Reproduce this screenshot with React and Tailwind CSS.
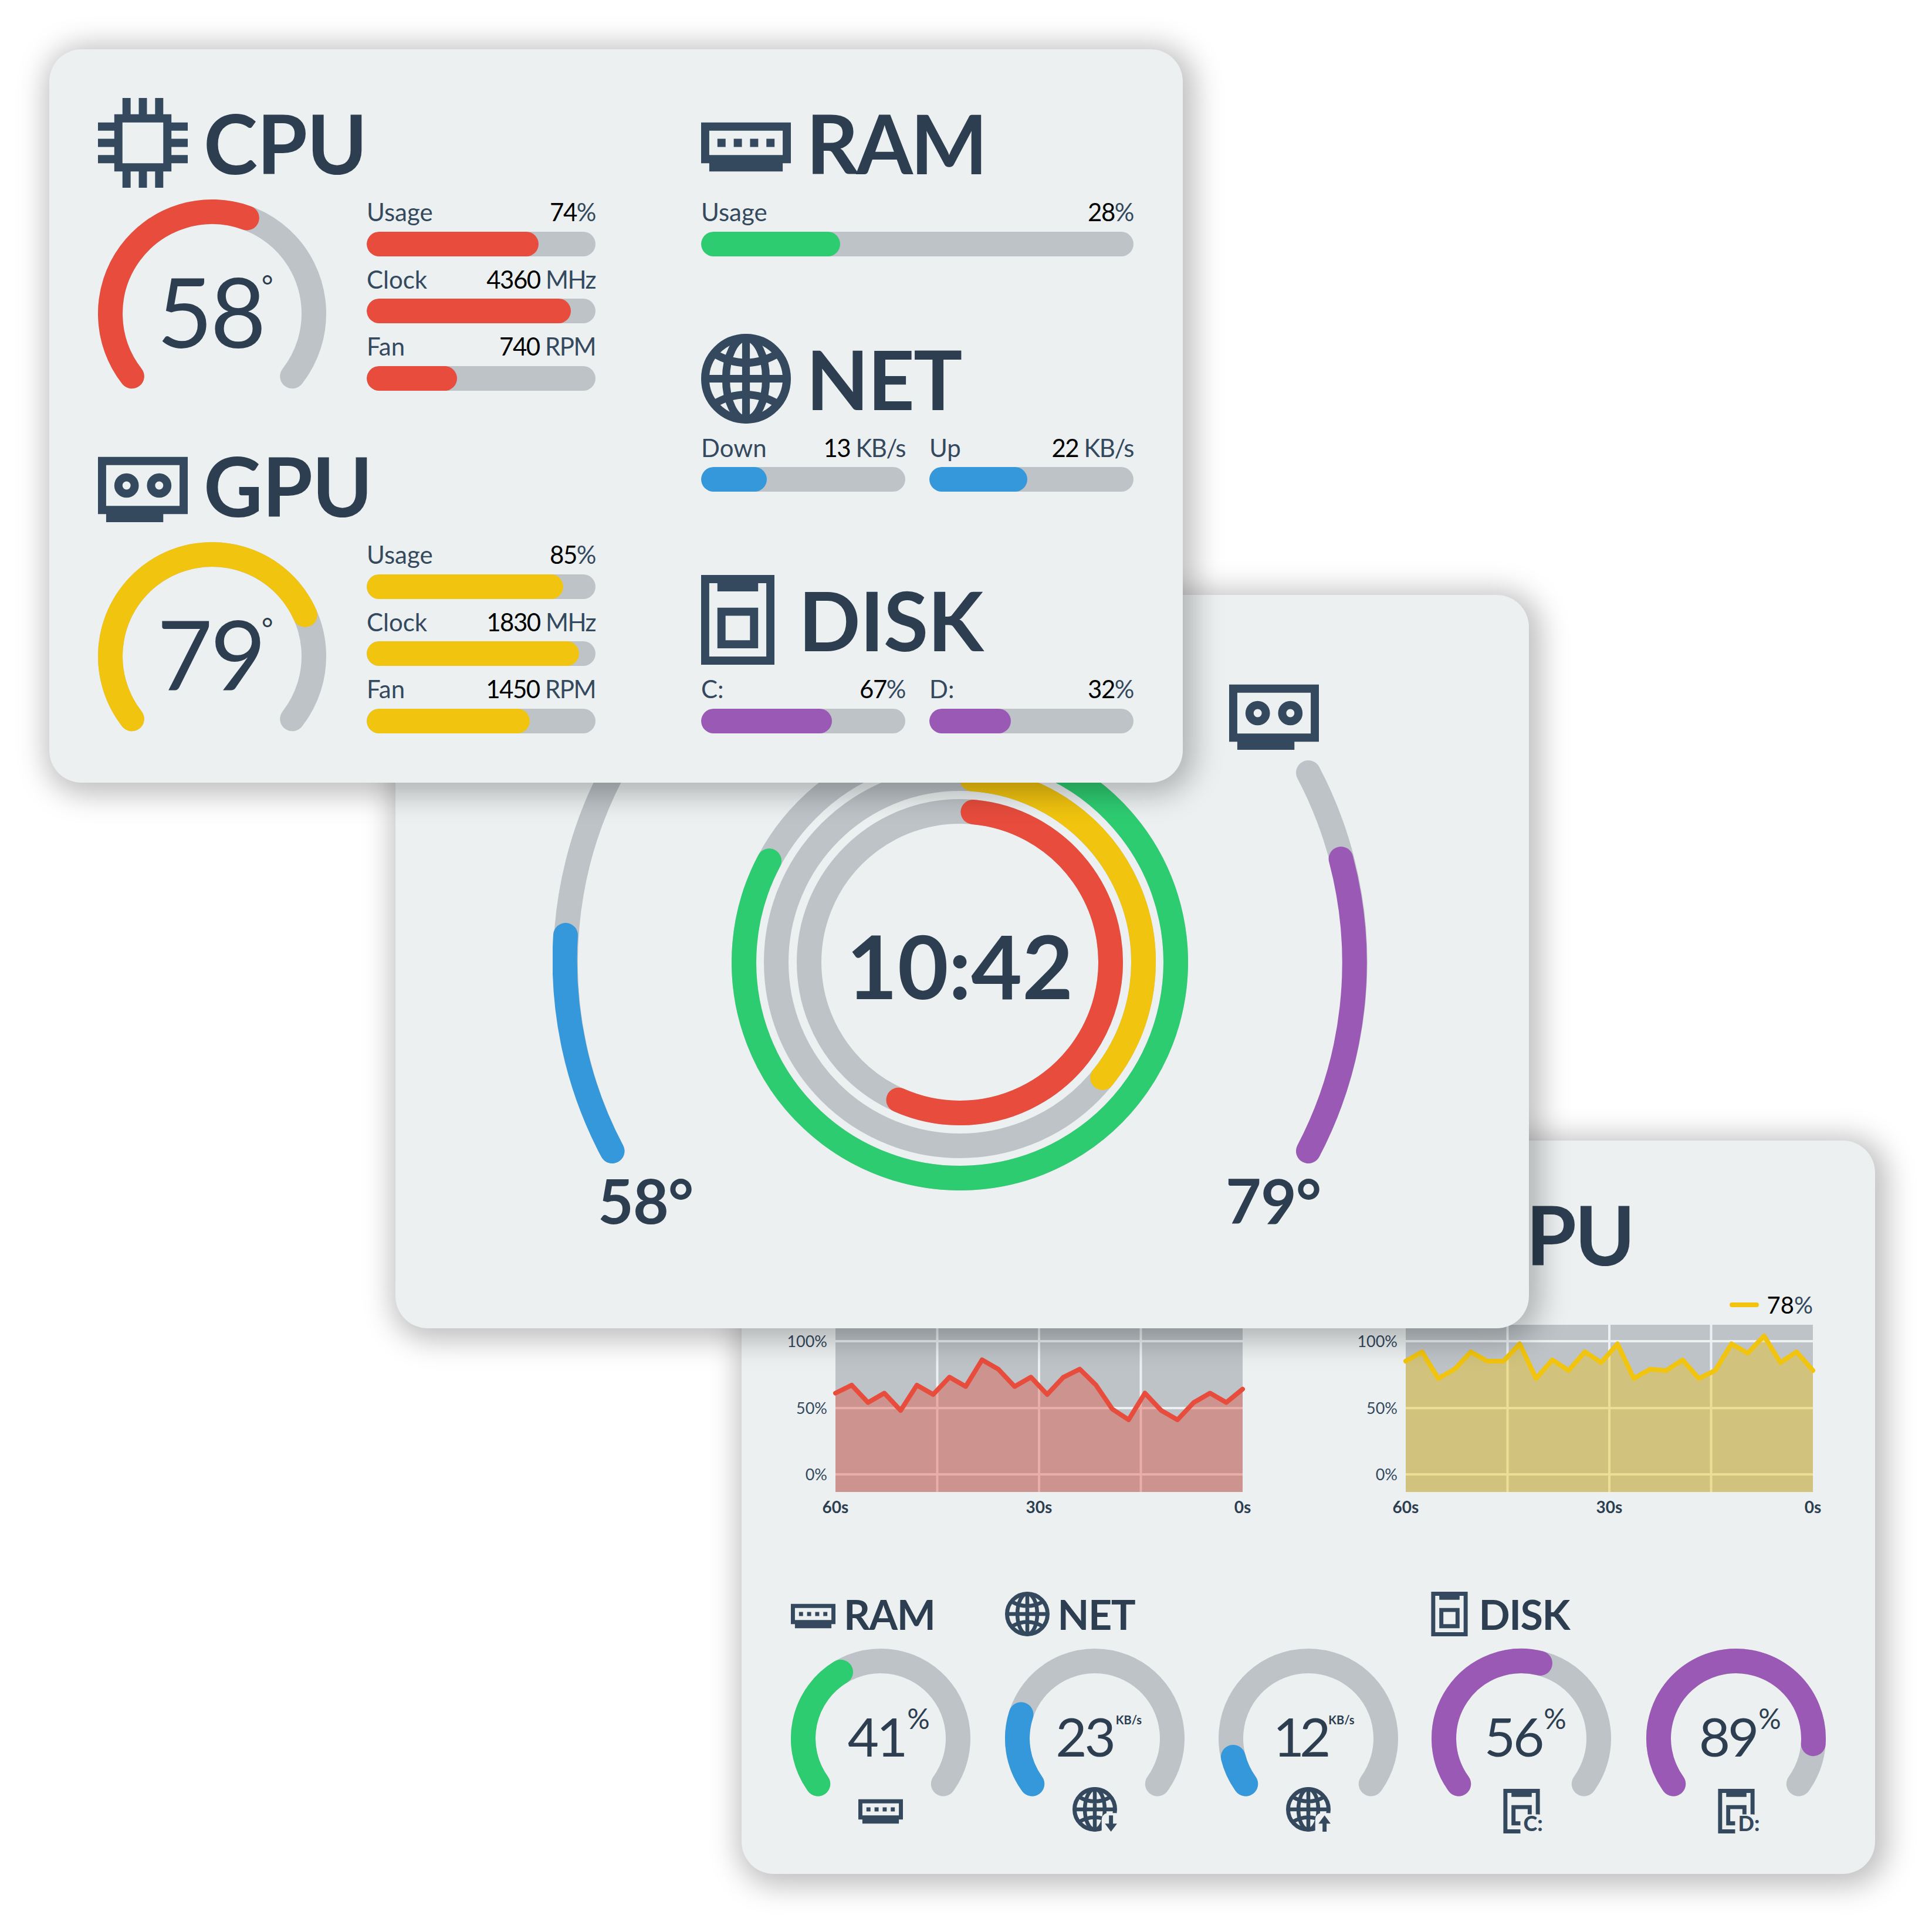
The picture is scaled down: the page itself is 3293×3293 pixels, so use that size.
import React from 'react';

const RED = '#e74c3c';
const YELLOW = '#f1c40f';
const GREEN = '#2ecc71';
const BLUE = '#3498db';
const PURPLE = '#9b59b6';
const TRACK = '#bdc3c7';
const SLATE = '#34495e';

const panelClass =
  'absolute w-[1932px] h-[1250px] rounded-[55px] bg-[#ecf0f1] shadow-[7px_7px_48px_14px_rgba(0,0,0,0.25)]';

const polar = (cx, cy, r, deg) => {
  const a = (deg * Math.PI) / 180;
  return [cx + r * Math.sin(a), cy - r * Math.cos(a)];
};

const arcPath = (cx, cy, r, from, to) => {
  const [x0, y0] = polar(cx, cy, r, from);
  const [x1, y1] = polar(cx, cy, r, to);
  return `M${x0} ${y0}A${r} ${r} 0 ${to - from > 180 ? 1 : 0} 1 ${x1} ${y1}`;
};

// icons, all on a 13.9px unit grid
const CpuIcon = ({ className }) => (
  <svg viewBox="0 0 11 11" className={className} fill={SLATE}>
    <path
      fillRule="evenodd"
      d="M3 0H4V2H5V0H6V2H7V0H8V2H9V3H11V4H9V5H11V6H9V7H11V8H9V9H8V11H7V9H6V11H5V9H4V11H3V9H2V8H0V7H2V6H0V5H2V4H0V3H2V2H3ZM3 3V8H8V3Z"
    />
  </svg>
);

const RamIcon = ({ className }) => (
  <svg viewBox="0 -3 11 11" className={className} fill={SLATE}>
    <path fillRule="evenodd" d="M0 0H11V5H10V6H1V5H0ZM1 1V4H10V1Z" />
    <path d="M2 2H3V3H2ZM4 2H5V3H4ZM6 2H7V3H6ZM8 2H9V3H8Z" />
  </svg>
);

const GpuIcon = ({ className }) => (
  <svg viewBox="0 -2 11 11" className={className} fill={SLATE}>
    <path fillRule="evenodd" d="M0 0H11V7H8V8H1V7H0ZM1 1V6H10V1Z" />
    <circle cx="3.5" cy="3.5" r="1" fill="none" stroke={SLATE} strokeWidth="1" />
    <circle cx="7.5" cy="3.5" r="1" fill="none" stroke={SLATE} strokeWidth="1" />
  </svg>
);

const Globe = () => (
  <g fill="none" stroke={SLATE} strokeWidth="0.95">
    <circle cx="5.5" cy="5.5" r="5" strokeWidth="1" />
    <ellipse cx="5.5" cy="5.5" rx="2.45" ry="5" />
    <path d="M5.5 .5V10.5M.5 5.5H10.5M1.4 2.3Q5.5 4.8 9.6 2.3M1.4 8.7Q5.5 6.2 9.6 8.7" />
  </g>
);

const GlobeIcon = ({ className, arrow }) => (
  <svg viewBox="0 0 11 11" className={className}>
    <Globe />
    {arrow && <rect x="7.2" y="6.4" width="5" height="6" rx="1.6" fill="#ecf0f1" />}
    {arrow === 'down' && <path d="M9 7H10V9H11L9.5 11L8 9H9Z" fill={SLATE} />}
    {arrow === 'up' && <path d="M9.5 7L11 9H10V11H9V9H8Z" fill={SLATE} />}
  </svg>
);

const DiskIcon = ({ className, letter }) => (
  <div className="relative flex">
    <svg viewBox="0 0 9 11" className={className} fill={SLATE}>
      <path fillRule="evenodd" d="M0 0H9V11H0ZM1 1V10H8V1H7V2H2V1ZM2 4H7V9H2ZM3 5V8H6V5Z" />
      {letter && <rect x="4.2" y="6.3" width="6" height="6" rx="1.6" fill="#ecf0f1" />}
    </svg>
    {letter && (
      <span className="absolute left-[35px] bottom-[-5px] font-['Lato',sans-serif] text-[36px] leading-[40px] font-black text-[#34495e] whitespace-nowrap">
        {letter}
      </span>
    )}
  </div>
);

const Header = ({ icon, title, className, titleClass }) => (
  <div className={`flex items-center h-[153px] ${className}`}>
    {icon}
    <span className={`text-[139px] leading-[153px] font-bold text-[#2c3e50] ${titleClass || 'tracking-[-1px]'}`}>{title}</span>
  </div>
);

const Bar = ({ label, value, unit, fill, color, className }) => (
  <div className={`flex flex-col ${className}`}>
    <div className="flex justify-between items-end h-[64px] mb-[8.5px] text-[42px] leading-[50px] text-[#34495e]">
      <span>{label}</span>
      <span className="tracking-[-1.5px]">
        <span className="text-black">{value}</span>
        {unit}
      </span>
    </div>
    <div className="h-[42px] rounded-full bg-[#bdc3c7] overflow-hidden">
      <div className={`h-full rounded-full ${color}`} style={{ width: fill }} />
    </div>
  </div>
);

// big gauge with bars next to it
const Gauge = ({ box, center, r, span, end, color, textClass, children }) => (
  <div className={`relative shrink-0 ${box}`}>
    <svg className="w-full h-full overflow-visible" fill="none" strokeWidth="42" strokeLinecap="round">
      <path d={arcPath(center, center, r, -span, span)} stroke={TRACK} />
      <path d={arcPath(center, center, r, -span, end)} stroke={color} />
    </svg>
    <div className={`absolute left-0 right-0 top-0 flex items-center justify-center ${textClass}`}>{children}</div>
  </div>
);

const Degree = ({ value }) => (
  <span className="relative mb-[10px] mr-[6px] text-[164px] leading-none tracking-[-4px] text-[#2c3e50]">
    {value}
    <span className="absolute left-full top-[9px] ml-[-4px] text-[48px] leading-[60px] tracking-normal">°</span>
  </span>
);

const SmallValue = ({ value, sup, bold, className }) => (
  <span className={`relative mb-[8px] text-[92px] leading-none text-[#2c3e50] ${className}`}>
    {value}
    <span
      className={`absolute left-full tracking-normal whitespace-nowrap ${
        bold ? 'ml-[4px] top-[6px] text-[20px] leading-[24px] font-bold' : 'ml-[3px] top-[-12px] text-[48px] leading-[56px]'
      }`}
    >
      {sup}
    </span>
  </span>
);

const SmallGauge = ({ end, color, value, sup, bold, shift, icon, className }) => (
  <div className={`flex flex-col items-center ${className || ''}`}>
    <Gauge
      box="w-[306px] h-[251px]"
      center={153}
      r={132}
      span={126}
      end={end}
      color={color}
      textClass="h-[306px]"
    >
      <SmallValue value={value} sup={sup} bold={bold} className={shift} />
    </Gauge>
    <div className="mt-[-15px] h-[76px] flex">{icon}</div>
  </div>
);

const HwSection = ({ header, gauge, bars, className }) => (
  <div className={className}>
    {header}
    <div className="flex gap-[69px]">
      <div className="mt-[20px]">{gauge}</div>
      <div className="w-[390px] mt-[2px]">{bars}</div>
    </div>
  </div>
);

const InfoPanel = () => (
  <div className={`${panelClass} left-[84px] top-[84px] flex pl-[83px] pt-[83px]`}>
    <div className="w-[1028px] shrink-0">
      <HwSection
        header={<Header className="gap-[27px]" icon={<CpuIcon className="w-[153px] h-[153px]" />} title="CPU" />}
        gauge={
          <Gauge box="w-[389px] h-[330px]" center={194.5} r={173.5} span={128} end={20} color={RED} textClass="h-[389px]">
            <Degree value="58" />
          </Gauge>
        }
        bars={
          <>
            <Bar label="Usage" value="74" unit="%" fill={293} color="bg-[#e74c3c]" />
            <Bar label="Clock" value="4360" unit=" MHz" fill={348} color="bg-[#e74c3c]" />
            <Bar label="Fan" value="740" unit=" RPM" fill={154} color="bg-[#e74c3c]" />
          </>
        }
      />
      <HwSection
        className="mt-[81px]"
        header={<Header className="gap-[27px]" icon={<GpuIcon className="w-[153px] h-[153px]" />} title="GPU" />}
        gauge={
          <Gauge box="w-[389px] h-[330px]" center={194.5} r={173.5} span={128} end={66} color={YELLOW} textClass="h-[389px]">
            <Degree value="79" />
          </Gauge>
        }
        bars={
          <>
            <Bar label="Usage" value="85" unit="%" fill={335} color="bg-[#f1c40f]" />
            <Bar label="Clock" value="1830" unit=" MHz" fill={362} color="bg-[#f1c40f]" />
            <Bar label="Fan" value="1450" unit=" RPM" fill={278} color="bg-[#f1c40f]" />
          </>
        }
      />
    </div>
    <div className="w-[737px] shrink-0">
      <Header className="gap-[26px]" titleClass="tracking-[-4px]" icon={<RamIcon className="w-[153px] h-[153px]" />} title="RAM" />
      <Bar className="mt-[2px]" label="Usage" value="28" unit="%" fill={237} color="bg-[#2ecc71]" />

      <Header className="gap-[26px] mt-[132px]" titleClass="tracking-[-2px]" icon={<GlobeIcon className="w-[153px] h-[153px]" />} title="NET" />
      <div className="flex gap-[41px] mt-[2px]">
        <Bar className="flex-1" label="Down" value="13" unit=" KB/s" fill={112} color="bg-[#3498db]" />
        <Bar className="flex-1" label="Up" value="22" unit=" KB/s" fill={167} color="bg-[#3498db]" />
      </div>

      <Header className="gap-[41px] mt-[142px]" icon={<DiskIcon className="w-[125px] h-[153px]" />} title="DISK" />
      <div className="flex gap-[41px] mt-[2px]">
        <Bar className="flex-1" label="C:" value="67" unit="%" fill={223} color="bg-[#9b59b6]" />
        <Bar className="flex-1" label="D:" value="32" unit="%" fill={139} color="bg-[#9b59b6]" />
      </div>
    </div>
  </div>
);

const SideArc = ({ x, y, sweep, endX, endY, color, className }) => (
  <svg viewBox="0 0 123 691" className={`w-[123px] h-[691px] ${className || ''}`} fill="none" strokeWidth="42" strokeLinecap="round">
    <path d={`M${x} 668A693 693 0 0 ${sweep} ${x} ${y}`} stroke={TRACK} />
    <path d={`M${x} 668A693 693 0 0 ${sweep} ${endX} ${endY}`} stroke={color} />
  </svg>
);

const DialPanel = () => (
  <div className={`${panelClass} left-[674px] top-[1014px] flex pl-[268px] pt-[125px]`}>
    <div className="w-[305px] shrink-0 flex flex-col">
      <CpuIcon className="w-[153px] h-[153px] ml-[82px]" />
      <SideArc x={101.5} y={23} sweep={1} endX={22} endY={300} color={BLUE} className="mt-[2px]" />
      <span className="ml-[77px] mt-[5px] text-[105px] leading-[110px] font-bold tracking-[-1px] text-[#2c3e50]">58°</span>
    </div>
    <div className="relative w-[778px] h-[778px] mt-[112px] shrink-0">
      <svg viewBox="0 0 778 778" className="w-full h-full" fill="none" strokeWidth="42" strokeLinecap="round">
        <circle cx="389" cy="389" r="368" stroke={TRACK} />
        <circle cx="389" cy="389" r="313" stroke={TRACK} />
        <circle cx="389" cy="389" r="257" stroke={TRACK} />
        <path d={arcPath(389, 389, 368, 3.3, 298)} stroke={GREEN} />
        <path d={arcPath(389, 389, 313, 3.8, 129)} stroke={YELLOW} />
        <path d={arcPath(389, 389, 257, 5, 204)} stroke={RED} />
      </svg>
      <div className="absolute inset-0 flex items-center justify-center">
        <span className="text-[150px] leading-none font-bold text-[#2c3e50] mt-[9px]">10:42</span>
      </div>
    </div>
    <div className="w-[307px] shrink-0 flex flex-col">
      <GpuIcon className="w-[153px] h-[153px] ml-[70px]" />
      <SideArc x={21} y={23} sweep={0} endX={76.6} endY={170} color={PURPLE} className="mt-[2px] self-end" />
      <span className="ml-[64px] mt-[5px] text-[105px] leading-[110px] font-bold tracking-[-1px] text-[#2c3e50]">79°</span>
    </div>
  </div>
);

const cpuLoad = [61, 67, 54, 61, 48, 67, 60, 73, 66, 86, 79, 66, 73, 60, 73, 79, 67, 49, 41, 61, 48, 41, 54, 61, 54, 64];
const gpuLoad = [85, 92, 72, 79, 92, 85, 85, 98, 72, 86, 78, 92, 84, 98, 72, 79, 78, 86, 72, 78, 98, 91, 104, 84, 92, 78];

const Chart = ({ data, color, value }) => {
  const xAt = (i) => (i * 694) / (data.length - 1);
  const yAt = (v) => 255 - v * 2.27;
  const line = data.map((v, i) => `${xAt(i)} ${yAt(v)}`).join('L');
  return (
    <div className="w-[770px] flex flex-col">
      <div className="h-[78px] flex items-center justify-end gap-[14px] pt-[10px] text-[40px] leading-[48px] text-[#34495e]">
        <div className="w-[50px] h-[8px] rounded-full" style={{ background: color }} />
        <span>
          <span className="text-black">{value}</span>%
        </span>
      </div>
      <div className="flex gap-[14px]">
        <div className="w-[62px] h-[257px] mt-[13px] flex flex-col justify-between items-end text-[27px] leading-[30px] text-[#34495e]">
          <span>100%</span>
          <span>50%</span>
          <span>0%</span>
        </div>
        <svg viewBox="0 0 694 285" className="w-[694px] h-[285px] overflow-visible">
          <rect width="694" height="285" fill={TRACK} />
          <path
            d="M0 28H694M0 142H694M0 255H694M173.5 0V285M347 0V285M520.5 0V285"
            stroke="#ecf0f1"
            strokeWidth="4"
            fill="none"
          />
          <path d={`M0 285L${line}L694 285Z`} fill={color} fillOpacity="0.4" />
          <path d={`M${line}`} stroke={color} strokeWidth="8" strokeLinejoin="round" strokeLinecap="round" fill="none" />
        </svg>
      </div>
      <div className="ml-[76px] w-[694px] mt-[10px] flex justify-between text-[28px] leading-[30px] font-bold text-[#2c3e50]">
        <span className="w-0 flex justify-center">60s</span>
        <span className="w-0 flex justify-center">30s</span>
        <span className="w-0 flex justify-center">0s</span>
      </div>
    </div>
  );
};

const SmallHeader = ({ icon, title, className }) => (
  <div className={`flex items-center h-[76px] ${className}`}>
    {icon}
    <span className="text-[70px] leading-[76px] font-bold tracking-[-1.5px] text-[#2c3e50]">{title}</span>
  </div>
);

const HistoryPanel = () => (
  <div className={`${panelClass} left-[1264px] top-[1944px] pl-[84px] pt-[83px]`}>
    <div className="flex gap-[202px]">
      <div>
        <Header className="gap-[27px]" icon={<CpuIcon className="w-[153px] h-[153px]" />} title="CPU" />
        <Chart data={cpuLoad} color={RED} value="64" />
      </div>
      <div>
        <Header className="gap-[27px] ml-[3px]" titleClass="tracking-[-3px]" icon={<GpuIcon className="w-[153px] h-[153px]" />} title="GPU" />
        <Chart data={gpuLoad} color={YELLOW} value="78" />
      </div>
    </div>
    <div className="mt-[130px] w-[1764px] grid grid-cols-5 gap-x-[58.5px] gap-y-[21px]">
      <SmallHeader className="gap-[14px]" icon={<RamIcon className="w-[76px] h-[76px]" />} title="RAM" />
      <SmallHeader className="gap-[14px] col-span-2" icon={<GlobeIcon className="w-[76px] h-[76px]" />} title="NET" />
      <SmallHeader className="gap-[19px] col-span-2 ml-[-3px]" icon={<DiskIcon className="w-[63px] h-[76px]" />} title="DISK" />
      <SmallGauge end={-31} color={GREEN} value="41" sup="%" shift="mr-[14px] tracking-[-4px]" icon={<RamIcon className="w-[76px] h-[76px]" />} />
      <SmallGauge end={-72} color={BLUE} value="23" sup="KB/s" bold shift="mr-[34px] tracking-[-4px]" icon={<GlobeIcon className="w-[76px] h-[76px]" arrow="down" />} />
      <SmallGauge end={-104} color={BLUE} value="12" sup="KB/s" bold shift="mr-[30px] tracking-[-8px]" icon={<GlobeIcon className="w-[76px] h-[76px]" arrow="up" />} />
      <SmallGauge className="ml-[-3px]" end={14} color={PURPLE} value="56" sup="%" shift="mr-[28px] tracking-[-4px]" icon={<DiskIcon className="w-[63px] h-[76px] mt-[3px]" letter="C:" />} />
      <SmallGauge end={94} color={PURPLE} value="89" sup="%" shift="mr-[28px] tracking-[-4px]" icon={<DiskIcon className="w-[63px] h-[76px] mt-[3px]" letter="D:" />} />
    </div>
  </div>
);

export default function App() {
  return (
    <div className="relative w-[3293px] h-[3293px] overflow-hidden bg-white font-['Lato',sans-serif]">
      <HistoryPanel />
      <DialPanel />
      <InfoPanel />
    </div>
  );
}
